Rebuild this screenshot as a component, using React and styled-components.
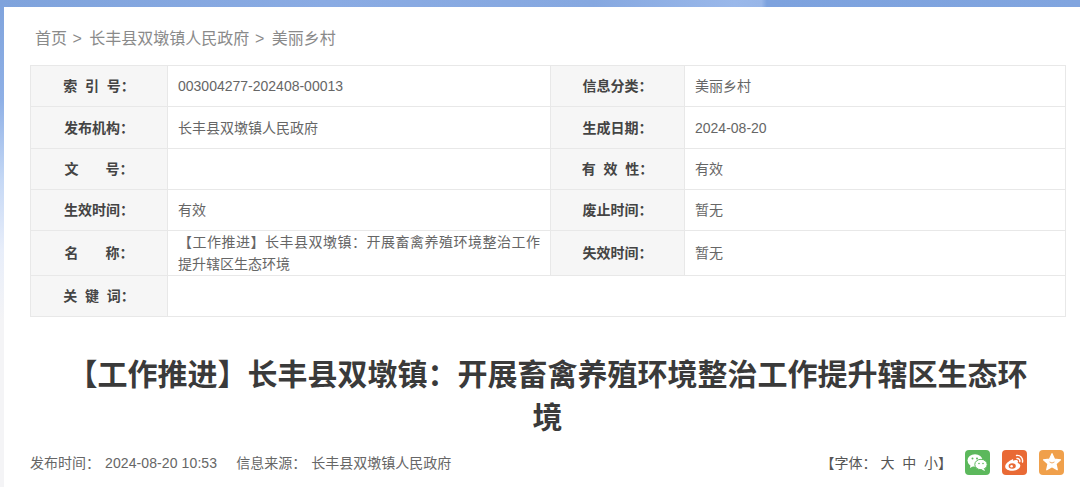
import React from 'react'
import styled, { createGlobalStyle } from 'styled-components'

const Global = createGlobalStyle`
  html, body {
    margin: 0;
    padding: 0;
    height: 487px;
    overflow: hidden;
    background: #fff;
    font-family: "Liberation Sans", "Noto Sans CJK SC", sans-serif;
  }
`

const Backdrop = styled.div`
  width: 1080px;
  height: 487px;
  overflow: hidden;
  padding: 7px 0 0 4px;
  box-sizing: border-box;
  background: linear-gradient(180deg, #7fa3dc 0, #8fb0e6 100px, #c5d8f5 180px, #e8eefa 250px, #f4f4f6 320px);
  position: relative;
  &::before {
    content: '';
    position: absolute;
    left: 0;
    right: 0;
    top: 0;
    height: 7px;
    background: linear-gradient(90deg, #7fa3dc, #8aabe3 30%, #86a8e0 55%, #9ab8ea 68%, #98b6e8 70.500%, #7da2de 71%, #81a5df);
  }
`

const Sheet = styled.main`
  height: 480px;
  background: #fff;
  padding: 0 15px 0 26px;
  box-sizing: border-box;
  color: #666;
`

const Crumbs = styled.nav`
  height: 58px;
  padding: 15px 0 0 5px;
  box-sizing: border-box;
  font-size: 16px;
  line-height: 34px;
  color: #8a8a8a;
`

const Sep = styled.span`
  margin: 0 7.5px 0 5.5px;
`

const MetaTable = styled.table`
  width: 1035px;
  border-collapse: collapse;
  table-layout: fixed;
  font-size: 14px;
  color: #666;
  td, th {
    border: 1px solid #e8e8e8;
    padding: 0;
  }
`

const Row = styled.tr`
  height: ${p => p.$h || 41}px;
`

const Label = styled.th`
  background: #f6f6f6;
  color: #444;
  font-weight: 700;
  font-size: 14px;
  line-height: 20px;
  text-align: center;
  white-space: pre;
`

const Value = styled.td`
  padding-left: 10px !important;
  line-height: 20px;
`

const NameValue = styled(Value)`
  padding-right: 10px !important;
  line-height: 22px;
  text-align: justify;
`

const Title = styled.h1`
  margin: 36px 0 0;
  padding: 0 26px;
  font-size: 30px;
  line-height: 43px;
  font-weight: 700;
  color: #3a3a3a;
  text-align: center;
`

const InfoBar = styled.div`
  display: flex;
  align-items: center;
  justify-content: space-between;
  margin-top: 8px;
  height: 30px;
  width: 1035px;
  font-size: 14px;
  color: #666;
`

const Meta = styled.div`
  display: flex;
  gap: 19px;
  white-space: pre;
`

const MetaKey = styled.span`
  margin-right: 5px;
`

const MetaDate = styled.span`
  letter-spacing: 0.1px;
`

const Tools = styled.div`
  display: flex;
  align-items: center;
  padding-right: 1px;
`

const FontSize = styled.span`
  font-size: 14px;
  color: #555;
  margin-right: 13px;
  white-space: pre;
`

const Share = styled.span`
  width: 25px;
  height: 25px;
  border-radius: 4px;
  background: ${p => p.$bg};
  margin-left: ${p => p.$gap || 0}px;
  display: flex;
  align-items: center;
  justify-content: center;
`

const WeChat = () => (
  <svg width="21" height="19" viewBox="0 0 21 19" fill="#fff">
    <ellipse cx="8" cy="7.5" rx="7.5" ry="6.2" />
    <path d="M3.5 11.5 L3 15 L6.5 13 Z" />
    <ellipse cx="14" cy="11.5" rx="6.2" ry="5.2" stroke="#5cb85c" strokeWidth="1" />
    <path d="M17 15.5 L18 18 L14.5 16.5 Z" />
    <circle cx="5.5" cy="5.5" r="1" fill="#5cb85c" />
    <circle cx="10" cy="5.5" r="1" fill="#5cb85c" />
    <circle cx="12" cy="10.5" r=".8" fill="#5cb85c" />
    <circle cx="16" cy="10.5" r=".8" fill="#5cb85c" />
  </svg>
)

const Weibo = () => (
  <svg width="21" height="19" viewBox="0 0 21 19">
    <path d="M8.5 6.5C4.5 8 1 11 1.2 13.8 1.4 16.6 5 18 9 17.7c4.5-.4 7.5-2.800 7.300-5.200-.1-1.600-1.800-2.300-2.700-2.500.6-1.300.5-2.300-.4-2.800-1.100-.6-2.900-.1-4.200.5.300-.9.100-2.200-.5-1.700z" fill="#fff" />
    <ellipse cx="8.200" cy="13" rx="3.600" ry="2.800" fill="#e96a35" />
    <circle cx="7.600" cy="13.200" r="1.300" fill="#fff" />
    <path d="M12.500 2.500c3.500-.6 6.800 2.200 6 6.500M13 5.500c1.800-.3 3.200 1.100 2.800 3" fill="none" stroke="#fff" strokeWidth="1.400" strokeLinecap="round" />
  </svg>
)

const Star = () => (
  <svg width="20" height="20" viewBox="0 0 24 24">
    <path d="M12 2l3 6.600 7.200.8-5.400 4.800 1.500 7.100L12 17.700l-6.300 3.600 1.500-7.100L1.800 9.400 9 8.600z" fill="#fff" stroke="#fff" strokeWidth="1.500" strokeLinejoin="round" />
    <path d="M9.500 12c1.300 1.400 3.700 1.400 5 0" fill="none" stroke="#f0b070" strokeWidth="1.300" strokeLinecap="round" />
  </svg>
)

const longName = '【工作推进】长丰县双墩镇：开展畜禽养殖环境整治工作提升辖区生态环境'

export default function App() {
  return (
    <Backdrop>
      <Global />
      <Sheet>
        <Crumbs>首页<Sep>&gt;</Sep>长丰县双墩镇人民政府<Sep>&gt;</Sep>美丽乡村</Crumbs>
        <MetaTable>
          <colgroup>
            <col style={{ width: 137 }} />
            <col style={{ width: 383 }} />
            <col style={{ width: 134 }} />
            <col style={{ width: 381 }} />
          </colgroup>
          <tbody>
            <Row>
              <Label>索  引  号：</Label>
              <Value>003004277-202408-00013</Value>
              <Label>信息分类：</Label>
              <Value>美丽乡村</Value>
            </Row>
            <Row $h={42}>
              <Label>发布机构：</Label>
              <Value>长丰县双墩镇人民政府</Value>
              <Label>生成日期：</Label>
              <Value>2024-08-20</Value>
            </Row>
            <Row>
              <Label>文{'       '}号：</Label>
              <Value />
              <Label>有  效  性：</Label>
              <Value>有效</Value>
            </Row>
            <Row>
              <Label>生效时间：</Label>
              <Value>有效</Value>
              <Label>废止时间：</Label>
              <Value>暂无</Value>
            </Row>
            <Row $h={45}>
              <Label>名{'       '}称：</Label>
              <NameValue>{longName}</NameValue>
              <Label>失效时间：</Label>
              <Value>暂无</Value>
            </Row>
            <Row>
              <Label>关  键  词：</Label>
              <Value colSpan={3} />
            </Row>
          </tbody>
        </MetaTable>
        <Title>{longName}</Title>
        <InfoBar>
          <Meta>
            <span><MetaKey>发布时间：</MetaKey><MetaDate>2024-08-20 10:53</MetaDate></span>
            <span><MetaKey>信息来源：</MetaKey>长丰县双墩镇人民政府</span>
          </Meta>
          <Tools>
            <FontSize>【字体： 大  中  小】</FontSize>
            <Share $bg="#5cb85c"><WeChat /></Share>
            <Share $bg="#e96a35" $gap={12}><Weibo /></Share>
            <Share $bg="#f0a04b" $gap={12}><Star /></Share>
          </Tools>
        </InfoBar>
      </Sheet>
    </Backdrop>
  )
}
